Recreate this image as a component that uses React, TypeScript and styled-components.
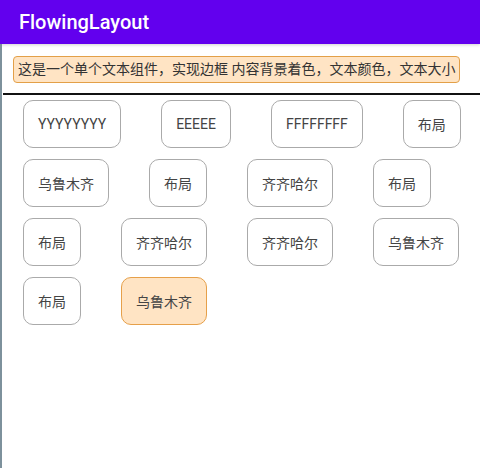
import * as React from 'react';
import styled, { createGlobalStyle } from 'styled-components';

const GlobalStyle = createGlobalStyle`
  html, body {
    margin: 0;
    padding: 0;
    background: #ffffff;
    font-family: Roboto, "Noto Sans CJK SC", sans-serif;
  }
`;

const Screen = styled.div`
  width: 480px;
  height: 468px;
  display: flex;
  flex-direction: column;
  background: #ffffff;
  overflow: hidden;
`;

const AppBar = styled.header`
  height: 44px;
  flex-shrink: 0;
  display: flex;
  align-items: center;
  padding-left: 19px;
  background-color: #6200ee;
  color: #ffffff;
  font-size: 20px;
  font-weight: 500;
  box-shadow: 0 1px 3px rgba(0, 0, 0, 0.18);
`;

const Content = styled.main`
  flex: 1;
  display: flex;
  flex-direction: column;
  align-items: flex-start;
  border-left: 2px solid #7d919c;
  padding-top: 12px;
`;

const Banner = styled.div`
  margin-left: 11px;
  padding: 3px 4px;
  border: 1px solid #e3a048;
  border-radius: 4px;
  background-color: #ffe4c4;
  color: #333333;
  font-size: 14px;
  line-height: 19px;
  white-space: nowrap;
`;

const Divider = styled.div`
  align-self: stretch;
  height: 2px;
  margin-top: 10px;
  margin-left: 1px;
  background-color: #111111;
`;

const Flow = styled.div`
  align-self: stretch;
  display: flex;
  flex-wrap: wrap;
  column-gap: 40px;
  row-gap: 11px;
  padding: 5px 10px 0 21px;
`;

const Chip = styled.div<{ $active?: boolean }>`
  box-sizing: border-box;
  height: 48px;
  display: flex;
  align-items: center;
  padding: 0 14px;
  border: 1px solid ${(p) => (p.$active ? '#e6a04a' : '#aaaaaa')};
  border-radius: 10px;
  background-color: ${(p) => (p.$active ? '#ffe4c4' : '#ffffff')};
  color: #444444;
  font-size: 14px;
  white-space: nowrap;
`;

const tags = [
  'YYYYYYYY',
  'EEEEE',
  'FFFFFFFF',
  '布局',
  '乌鲁木齐',
  '布局',
  '齐齐哈尔',
  '布局',
  '布局',
  '齐齐哈尔',
  '齐齐哈尔',
  '乌鲁木齐',
  '布局',
  '乌鲁木齐',
];

const App: React.FC = () => {
  return (
    <Screen>
      <GlobalStyle />
      <AppBar>FlowingLayout</AppBar>
      <Content>
        <Banner>这是一个单个文本组件，实现边框 内容背景着色，文本颜色，文本大小</Banner>
        <Divider />
        <Flow>
          {tags.map((t, i) => (
            <Chip key={i} $active={i === tags.length - 1}>
              {t}
            </Chip>
          ))}
        </Flow>
      </Content>
    </Screen>
  );
};

export default App;
